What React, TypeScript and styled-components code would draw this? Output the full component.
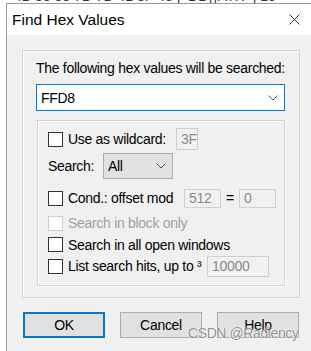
import React from "react";
import styled, { createGlobalStyle } from "styled-components";

const GlobalStyle = createGlobalStyle`
  body {
    margin: 0;
    background: #ffffff;
  }
`;

const Page = styled.div`
  position: relative;
  width: 311px;
  height: 351px;
  overflow: hidden;
  background: #ffffff;
  font-family: "Liberation Sans", Arial, sans-serif;
  color: #000000;
`;

const Behind = styled.div`
  height: 3px;
  overflow: hidden;
  span {
    display: block;
    margin-top: -11px;
    padding-left: 14px;
    font-size: 14px;
    line-height: 14px;
    white-space: pre;
    color: #333333;
  }
`;

const Window = styled.div`
  margin-left: 6px;
  width: 305px;
  height: 348px;
  border-left: 1px solid #9c9c9c;
  border-top: 1px solid #9c9c9c;
  display: flex;
  flex-direction: column;
`;

const TitleBar = styled.div`
  height: 31px;
  flex-shrink: 0;
  display: flex;
  align-items: center;
  justify-content: space-between;
  padding: 0 12px 0 5px;
  background: #ffffff;
`;

const Title = styled.div`
  font-size: 15.5px;
  color: #000000;
`;

const Body = styled.div`
  flex: 1;
  background: #f0f0f0;
  padding: 15px 0 0 15px;
`;

const Group = styled.div`
  box-sizing: border-box;
  width: 278px;
  height: 248px;
  border: 1px solid #d3d3d3;
  box-shadow: inset 1px 1px 0 #ffffff;
  padding: 9px 0 0 13px;
`;

const Caption = styled.div`
  font-size: 14px;
  letter-spacing: -0.3px;
  line-height: 16px;
`;

const Combo = styled.div`
  box-sizing: border-box;
  margin-top: 8px;
  width: 249px;
  height: 27px;
  border: 1px solid #0078d7;
  background: #ffffff;
  display: flex;
  align-items: center;
  justify-content: space-between;
  padding: 0 6px 0 4px;
  font-size: 14px;
  letter-spacing: -0.3px;
`;

const Options = styled.div`
  box-sizing: border-box;
  margin: 9px 0 0 1px;
  width: 248px;
  height: 166px;
  border: 1px solid #d3d3d3;
  box-shadow: inset 1px 1px 0 #ffffff, 1px 1px 0 #ffffff;
  padding: 7px 0 0 10px;
  display: flex;
  flex-direction: column;
`;

const Row = styled.div<{ $top: number; $h?: number }>`
  margin-top: ${(p) => p.$top}px;
  height: ${(p) => p.$h ?? 22}px;
  display: flex;
  align-items: center;
  font-size: 14px;
  letter-spacing: -0.3px;
`;

const Check = styled.span<{ $disabled?: boolean }>`
  box-sizing: border-box;
  width: 15px;
  height: 15px;
  flex-shrink: 0;
  border: 1px solid ${(p) => (p.$disabled ? "#cccccc" : "#333333")};
  background: #ffffff;
  margin-right: 5px;
`;

const Label = styled.span<{ $w?: number; $disabled?: boolean }>`
  width: ${(p) => (p.$w ? `${p.$w}px` : "auto")};
  flex-shrink: 0;
  white-space: nowrap;
  color: ${(p) => (p.$disabled ? "#a0a0a0" : "#000000")};
`;

const Field = styled.span<{ $w: number; $h: number }>`
  box-sizing: border-box;
  width: ${(p) => p.$w}px;
  height: ${(p) => p.$h}px;
  border: 1px solid #cfcfcf;
  background: #f0f0f0;
  color: #8a8a8a;
  padding-left: 4px;
  display: flex;
  align-items: center;
`;

const Eq = styled.span`
  width: 18px;
  text-align: center;
`;

const Select = styled.div`
  box-sizing: border-box;
  width: 70px;
  height: 26px;
  border: 1px solid #adadad;
  background: #e1e1e1;
  display: flex;
  align-items: center;
  justify-content: space-between;
  padding: 0 6px 0 4px;
`;

const Buttons = styled.div`
  margin: 14px 0 0 1px;
  display: flex;
  gap: 15px;
`;

const Button = styled.div<{ $default?: boolean }>`
  box-sizing: border-box;
  width: 82px;
  height: 26px;
  border: ${(p) => (p.$default ? "2px solid #0078d7" : "1px solid #adadad")};
  background: #e1e1e1;
  display: flex;
  align-items: center;
  justify-content: center;
  font-size: 14px;
  letter-spacing: -0.3px;
`;

const Watermark = styled.div`
  position: absolute;
  left: 188px;
  top: 325px;
  font-size: 14px;
  letter-spacing: -0.4px;
  color: rgba(95, 95, 95, 0.7);
  text-shadow: 0 0 1px #ffffff, 0 0 2px #ffffff;
  pointer-events: none;
`;

const Chevron = ({ w = 10 }: { w?: number }) => (
  <svg width={w} height={6} viewBox="0 0 10 6">
    <polyline points="0.5,0.5 5,5 9.5,0.5" fill="none" stroke="#555" strokeWidth="1" />
  </svg>
);

const CloseIcon = () => (
  <svg width={11} height={11} viewBox="0 0 11 11">
    <path d="M0.5 0.5 L10.5 10.5 M10.5 0.5 L0.5 10.5" stroke="#333" strokeWidth="1" />
  </svg>
);

const App = () => {
  return (
    <Page>
      <GlobalStyle />
      <Behind>
        <span>{"4B 83 83 7D 7D 41 3F 48 |  ÐÐ}}A?H  | 10"}</span>
      </Behind>
      <Window>
        <TitleBar>
          <Title>Find Hex Values</Title>
          <CloseIcon />
        </TitleBar>
        <Body>
          <Group>
            <Caption>The following hex values will be searched:</Caption>
            <Combo>
              <span>FFD8</span>
              <Chevron />
            </Combo>
            <Options>
              <Row $top={0}>
                <Check />
                <Label $w={108}>Use as wildcard:</Label>
                <Field $w={22} $h={22}>3F</Field>
              </Row>
              <Row $top={5}>
                <Label $w={55}>Search:</Label>
                <Select>
                  <span>All</span>
                  <Chevron />
                </Select>
              </Row>
              <Row $top={10}>
                <Check />
                <Label $w={116}>Cond.: offset mod</Label>
                <Field $w={37} $h={19}>512</Field>
                <Eq>=</Eq>
                <Field $w={37} $h={19}>0</Field>
              </Row>
              <Row $top={3}>
                <Check $disabled />
                <Label $disabled>Search in block only</Label>
              </Row>
              <Row $top={0} $h={21}>
                <Check />
                <Label>Search in all open windows</Label>
              </Row>
              <Row $top={0}>
                <Check />
                <Label $w={139}>List search hits, up to ³</Label>
                <Field $w={62} $h={21}>10000</Field>
              </Row>
            </Options>
          </Group>
          <Buttons>
            <Button $default>OK</Button>
            <Button>Cancel</Button>
            <Button>Help</Button>
          </Buttons>
        </Body>
      </Window>
      <Watermark>CSDN @Radiency</Watermark>
    </Page>
  );
};

export default App;
